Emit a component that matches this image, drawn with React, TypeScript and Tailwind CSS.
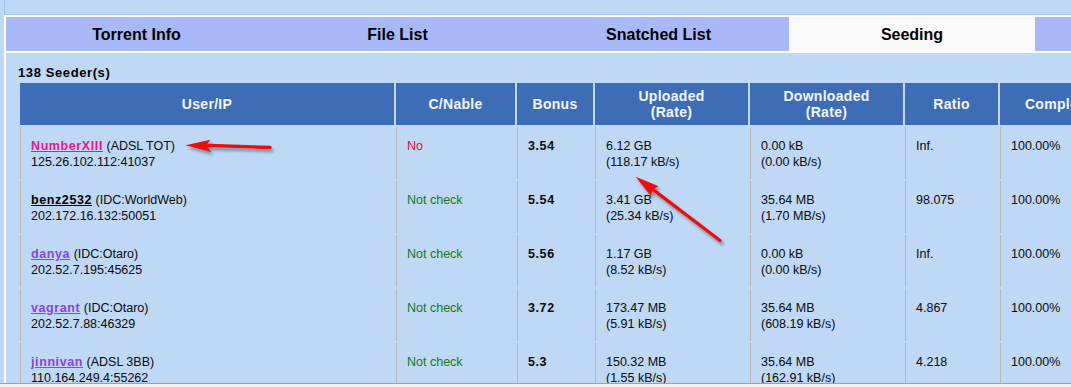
import React from "react";

type Row = {
  user: string;
  userColor: string;
  isp: string;
  ip: string;
  conn: string;
  connColor: string;
  bonus: string;
  up: string;
  upRate: string;
  down: string;
  downRate: string;
  ratio: string;
  complete: string;
};

const rows: Row[] = [
  { user: "NumberXIII", userColor: "text-[#e8168c]", isp: "(ADSL TOT)", ip: "125.26.102.112:41037", conn: "No", connColor: "text-[#ee0a22]", bonus: "3.54", up: "6.12 GB", upRate: "(118.17 kB/s)", down: "0.00 kB", downRate: "(0.00 kB/s)", ratio: "Inf.", complete: "100.00%" },
  { user: "benz2532", userColor: "text-[#000000]", isp: "(IDC:WorldWeb)", ip: "202.172.16.132:50051", conn: "Not check", connColor: "text-[#167a16]", bonus: "5.54", up: "3.41 GB", upRate: "(25.34 kB/s)", down: "35.64 MB", downRate: "(1.70 MB/s)", ratio: "98.075", complete: "100.00%" },
  { user: "danya", userColor: "text-[#8a44dc]", isp: "(IDC:Otaro)", ip: "202.52.7.195:45625", conn: "Not check", connColor: "text-[#167a16]", bonus: "5.56", up: "1.17 GB", upRate: "(8.52 kB/s)", down: "0.00 kB", downRate: "(0.00 kB/s)", ratio: "Inf.", complete: "100.00%" },
  { user: "vagrant", userColor: "text-[#8a44dc]", isp: "(IDC:Otaro)", ip: "202.52.7.88:46329", conn: "Not check", connColor: "text-[#167a16]", bonus: "3.72", up: "173.47 MB", upRate: "(5.91 kB/s)", down: "35.64 MB", downRate: "(608.19 kB/s)", ratio: "4.867", complete: "100.00%" },
  { user: "jinnivan", userColor: "text-[#8a44dc]", isp: "(ADSL 3BB)", ip: "110.164.249.4:55262", conn: "Not check", connColor: "text-[#167a16]", bonus: "5.3", up: "150.32 MB", upRate: "(1.55 kB/s)", down: "35.64 MB", downRate: "(162.91 kB/s)", ratio: "4.218", complete: "100.00%" },
];

const font = { fontFamily: '"Liberation Sans", Arial, sans-serif' };

function Th({ children }: { children: React.ReactNode }) {
  return (
    <div className="h-[42px] bg-[#3e6db5] flex items-center justify-center text-center text-[14px] leading-[16px] font-bold tracking-[0.3px] text-[#f2f6ff]">
      <div>{children}</div>
    </div>
  );
}

function Td({ children }: { children: React.ReactNode }) {
  return (
    <div className="h-[52px] border-l border-[#b7b7b7] pl-[10px] pt-[11px] text-[12.5px] leading-[16px] text-[#0a0a0a] whitespace-nowrap overflow-hidden">
      {children}
    </div>
  );
}

function Tab({ label, active, w }: { label: string; active?: boolean; w: string }) {
  return (
    <div
      className={`${w} shrink-0 h-full pt-[2px] flex items-center justify-center text-[16px] font-bold text-black ${
        active ? "bg-[#f9f9f9]" : "bg-[#a8b8f8]"
      }`}
    >
      {label}
    </div>
  );
}

function Arrows() {
  return (
    <svg className="absolute left-0 top-0 pointer-events-none" width="1071" height="387" viewBox="0 0 1071 387">
      <defs>
        <filter id="sh" x="-20%" y="-50%" width="140%" height="200%">
          <feDropShadow dx="2" dy="3" stdDeviation="1.6" floodColor="#000" floodOpacity="0.35" />
        </filter>
      </defs>
      <g filter="url(#sh)" fill="#ee1111" stroke="none">
        <line x1="270" y1="147.5" x2="203" y2="145.3" stroke="#ee1111" strokeWidth="3.4" strokeLinecap="round" />
        <polygon points="185.5,145.3 210.5,139.8 206,145.4 211.5,152" />
        <line x1="720" y1="240.5" x2="651" y2="188" stroke="#ee1111" strokeWidth="3.4" strokeLinecap="round" />
        <polygon points="635.7,176.7 658.6,186.2 652.3,189.9 651,196.2" />
      </g>
    </svg>
  );
}

export default function App() {
  return (
    <div className="relative w-[1071px] h-[387px] overflow-hidden bg-[#bed8f5] flex flex-col" style={font}>
      <div className="h-[15px] shrink-0 ml-[4px] border-l border-b border-[#a3c5ec]" />
      <div className="flex-1 min-h-0 ml-[4px] border-l-2 border-t-2 border-white flex flex-col overflow-hidden">
        <div className="h-[36px] shrink-0 flex border-b-2 border-white">
          <Tab label="Torrent Info" w="w-[261px]" />
          <Tab label="File List" w="w-[261px]" />
          <Tab label="Snatched List" w="w-[261px]" />
          <Tab label="Seeding" w="w-[246px]" active />
          <Tab label="" w="w-[261px]" />
        </div>
        <div className="pl-[12px] pt-[12px]">
          <div className="h-[16px] text-[13px] leading-[16px] font-bold tracking-[0.6px] text-black">138 Seeder(s)</div>
          <div className="mt-[2px] ml-[2px] grid grid-cols-[374px_119px_76px_153px_153px_93px_116px] gap-[2px] w-max">
            <Th>User/IP</Th>
            <Th>C/Nable</Th>
            <Th>Bonus</Th>
            <Th>
              Uploaded
              <br />
              (Rate)
            </Th>
            <Th>
              Downloaded
              <br />
              (Rate)
            </Th>
            <Th>Ratio</Th>
            <Th>Complete</Th>
            {rows.map((r) => (
              <React.Fragment key={r.user}>
                <Td>
                  <div>
                    <span className={`font-bold underline tracking-[0.6px] ${r.userColor}`}>{r.user}</span> {r.isp}
                  </div>
                  <div>{r.ip}</div>
                </Td>
                <Td>
                  <span className={r.connColor}>{r.conn}</span>
                </Td>
                <Td>
                  <span className="font-bold tracking-[0.6px]">{r.bonus}</span>
                </Td>
                <Td>
                  <div>{r.up}</div>
                  <div>{r.upRate}</div>
                </Td>
                <Td>
                  <div>{r.down}</div>
                  <div>{r.downRate}</div>
                </Td>
                <Td>{r.ratio}</Td>
                <Td>{r.complete}</Td>
              </React.Fragment>
            ))}
          </div>
        </div>
      </div>
      <div className="h-[4px] shrink-0 border-t border-[#a0a0a0] bg-[#f0f0f0]" />
      <Arrows />
    </div>
  );
}
